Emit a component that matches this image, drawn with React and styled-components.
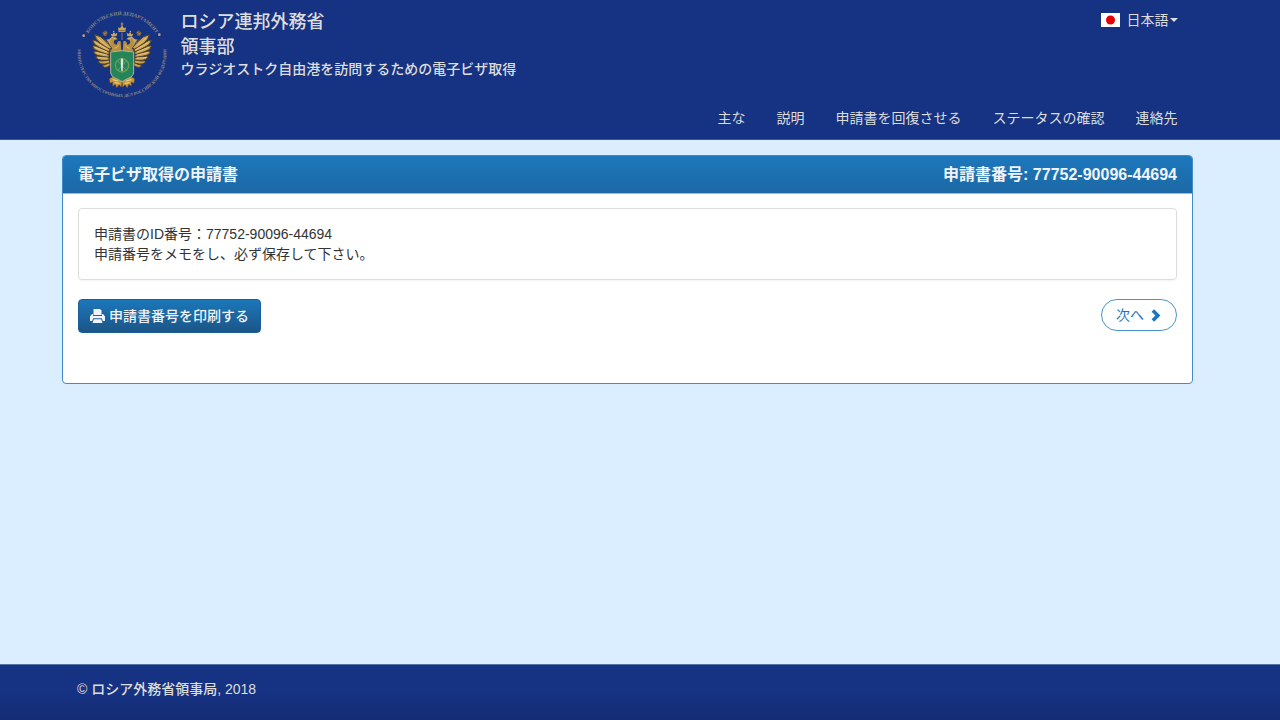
import React, { useState } from "react";
import styled, { createGlobalStyle } from "styled-components";

const GlobalStyle = createGlobalStyle`
  * {
    box-sizing: border-box;
  }

  body {
    margin: 0;
    background-color: #dbeeff;
    color: #333;
    font-family: "Liberation Sans", "Noto Sans CJK JP", sans-serif;
    font-size: 14px;
    line-height: 20px;
  }

  button,
  select {
    font: inherit;
  }
`;

const Page = styled.div`
  min-height: 100vh;
  display: flex;
  flex-direction: column;
`;

const Container = styled.div`
  max-width: 1131px;
  margin: 0 auto;
  padding: 0 ${(props) => (props.$flush ? "0" : "15px")};
`;

const Header = styled.header`
  padding: 10px 26px 11px 0;
  border-bottom: 1px solid #3f5796;
  background-color: #163282;
  color: #ddd;
`;

const TopRow = styled.div`
  display: flex;
  justify-content: space-between;
  align-items: flex-start;
`;

const Brand = styled.a`
  display: flex;
  gap: 14px;
  color: inherit;
  font-weight: 500;
  text-decoration: none;
`;

const EmblemSvg = styled.svg`
  display: block;
  width: 90px;
  height: 90px;
`;

const BrandText = styled.div`
  display: flex;
  flex-direction: column;
`;

const BrandTitle = styled.span`
  font-size: 18px;
  line-height: 25px;
`;

const BrandSubtitle = styled.span`
  line-height: 18px;
`;

const LanguagePicker = styled.label`
  display: flex;
  align-items: center;
`;

const FlagSvg = styled.svg`
  display: block;
  width: 19px;
  height: 14px;
  margin-right: 7px;
`;

const LanguageSelect = styled.select`
  appearance: none;
  padding: 0;
  border: 0;
  background: none;
  color: inherit;
  cursor: pointer;

  option {
    color: #333;
  }
`;

const Caret = styled.span`
  margin-left: 1px;
  border-top: 4px solid currentColor;
  border-right: 4px solid transparent;
  border-left: 4px solid transparent;
`;

const Nav = styled.nav`
  display: flex;
  flex-wrap: wrap;
  justify-content: flex-end;
  gap: 0 31px;
  margin-top: 8px;
`;

const NavLink = styled.a`
  color: inherit;
  text-decoration: none;
`;

const Main = styled.main`
  flex: 1;
  padding: 15px 25px 20px 0;
`;

const Panel = styled.section`
  border: 1px solid #428bca;
  border-radius: 4px;
  background-color: #fff;
  overflow: hidden;
`;

const PanelHeading = styled.div`
  display: flex;
  justify-content: space-between;
  padding: 9px 15px 8px;
  border-bottom: 1px solid #8fbfe2;
  background-image: linear-gradient(#1c78bc, #1c68a5);
  color: #f0f4f9;
`;

const PanelTitle = styled.h1`
  margin: 0;
  font-size: 16px;
  line-height: 20px;
  font-weight: 700;
`;

const PanelBody = styled.div`
  padding: 14px 15px 50px;
`;

const Well = styled.div`
  padding: 15px;
  border: 1px solid #ddd;
  border-radius: 4px;
  box-shadow: 0 1px 2px rgba(0, 0, 0, 0.05);
`;

const Actions = styled.div`
  display: flex;
  justify-content: space-between;
  align-items: flex-start;
  margin-top: 19px;
`;

const PrintButton = styled.button`
  display: flex;
  align-items: center;
  gap: 4px;
  padding: 6px 11px 6px 11px;
  border: 1px solid #1c5f96;
  border-radius: 4px;
  background-image: linear-gradient(#1c77ba, #1b5587);
  color: #f0f4f9;
  font-weight: 500;
  cursor: pointer;
`;

const NextButton = styled.button`
  display: flex;
  align-items: center;
  gap: 7px;
  padding: 5px 15px 5px 14px;
  border: 1px solid #4a94cb;
  border-radius: 16px;
  background-color: #fff;
  color: #1c75bb;
  cursor: pointer;
`;

const Footer = styled.footer`
  padding: 14px 25px 21px 0;
  border-top: 1px solid #5a70a8;
  background-image: linear-gradient(#163282 50%, #132c74);
  color: #ddd;
  font-weight: 500;
`;

const navItems = [
  "主な",
  "説明",
  "申請書を回復させる",
  "ステータスの確認",
  "連絡先",
];

const applicationId = "77752-90096-44694";

// right half of a wing, feathers fan out from the shoulder
const feathers = [
  "M212 142 L226 126 Q244 106 262 104 Q260 118 246 129 L218 152 Z",
  "M216 148 L246 130 Q262 118 268 121 Q266 134 250 141 L219 158 Z",
  "M218 156 L248 143 Q264 134 268 139 Q266 150 248 155 L220 165 Z",
  "M219 164 L246 157 Q262 151 265 156 Q261 166 244 168 L219 173 Z",
  "M219 172 L243 170 Q256 166 259 171 Q254 180 240 181 L218 181 Z",
  "M218 180 L238 183 Q250 181 251 186 Q245 194 232 192 L217 189 Z",
  "M217 188 L231 194 Q239 194 239 198 Q232 205 224 201 L215 196 Z",
];

const HalfEagle = () => (
  <g>
    <path
      d="M182 154 L184 124 Q190 121 193 125 L196 134 Q204 134 205 127 Q205 120 199 119 L193 118 Q198 109 207 111 Q218 113 218 126 Q218 137 209 144 L216 154 Z"
      fill="#b98f3e"
    />
    <path
      d="M207 111 Q218 113 218 126 Q218 137 209 144 M190 136 Q194 144 203 145 M199 115 L206 116"
      fill="none"
      stroke="#ead79a"
      strokeWidth="2"
    />
    <path d="M214 116 L228 119 L222 124 L227 129 L216 127 Z" fill="#c8a65a" />
    <path d="M196 108 L194 98 L200 102 L205 95 L208 103 L214 101 L210 110 Z" fill="#c8a65a" />
    <circle cx="205" cy="94" r="2" fill="#e6d08a" />
    {feathers.map((d) => (
      <path key={d} d={d} fill="#cba250" stroke="#4f4028" strokeWidth="3" />
    ))}
    <path
      d="M224 140 L253 113 M224 148 L260 127 M225 156 L261 142 M225 165 L257 158 M224 174 L252 173"
      stroke="#f1dda0"
      strokeWidth="2"
    />
    <path d="M222 96 L231 91 L239 99 L234 109 L226 106 Z" fill="#6d5a42" />
    <path d="M225 97 L234 102 M228 107 L236 98" stroke="#b9975a" strokeWidth="2" />
    <path
      d="M192 236 L207 230 L218 236 L216 250 L208 246 L208 259 L200 253 L196 264 L189 254 L182 262 L180 244 Z"
      fill="#c9953a"
      stroke="#5c4722"
      strokeWidth="1"
    />
    <path d="M192 243 L208 239 M188 250 L202 248" stroke="#f3d988" strokeWidth="3" />
  </g>
);

const Emblem = () => (
  <EmblemSvg viewBox="45 30 270 270" aria-hidden="true">
    <defs>
      <path id="ring-top" d="M60 165 A120 120 0 0 1 300 165" />
      <path id="ring-bottom" d="M49 135 A133 133 0 1 0 311 135" />
    </defs>
    <g
      fill="#918b84"
      fontFamily="Liberation Serif, serif"
      fontWeight="700"
      textAnchor="middle"
    >
      <text fontSize="15">
        <textPath href="#ring-top" startOffset="50%">
          КОНСУЛЬСКИЙ ДЕПАРТАМЕНТ
        </textPath>
      </text>
      <text fontSize="13">
        <textPath href="#ring-bottom" startOffset="50%">
          МИНИСТЕРСТВА ИНОСТРАННЫХ ДЕЛ РОССИЙСКОЙ ФЕДЕРАЦИИ
        </textPath>
      </text>
    </g>
    <circle cx="65" cy="107" r="4" fill="#c2a66a" />
    <circle cx="292" cy="104" r="4" fill="#c2a66a" />
    <HalfEagle />
    <g transform="matrix(-1 0 0 1 360 0)">
      <HalfEagle />
    </g>
    <path
      d="M170 96 L168 82 L174 85 L180 76 L186 85 L192 82 L190 96 Z"
      fill="#c8a65a"
    />
    <path d="M180 67 V79 M176 72 H184" stroke="#d9bd78" strokeWidth="2" />
    <path d="M172 92 H188" stroke="#6d5330" strokeWidth="2" />
    <path d="M180 97 V120" stroke="#8c7650" strokeWidth="3" />
    <path
      d="M146 156 Q180 148 215 156 V215 Q215 231 196 236 L180 245 L164 236 Q146 231 146 215 Z"
      fill="#258558"
      stroke="#b5b59a"
      strokeWidth="3"
    />
    <circle cx="180" cy="196" r="20" fill="none" stroke="#6f9c58" strokeWidth="4" />
    <path d="M167 183 L192 210 M193 183 L168 210" stroke="#6aa567" strokeWidth="3" />
    <path d="M180 173 L184 180 L182 213 H178 L176 180 Z" fill="#dbe9dc" />
  </EmblemSvg>
);

const Flag = () => (
  <FlagSvg viewBox="0 0 19 14" aria-hidden="true">
    <rect width="19" height="14" fill="#fff" />
    <circle cx="9.5" cy="7" r="4.5" fill="#e60000" />
  </FlagSvg>
);

const PrintIcon = () => (
  <svg width="15" height="14" viewBox="0 0 15 14" fill="currentColor" aria-hidden="true">
    <path d="M4 0h6l1.500 1.500V6h-8V.5z" />
    <path d="M2 5h1v2h9V5h1l2 2.500V12h-2.200l-1-2.800H3.200L2.200 12H0V7.500z" />
    <path d="M3.800 10.300h7.400l1.300 3.700h-10z" />
  </svg>
);

const ChevronIcon = () => (
  <svg width="10" height="13" viewBox="0 0 10 13" fill="currentColor" aria-hidden="true">
    <path d="M3.100.2 9.400 6.500 3.100 12.800.6 10.300 4.400 6.500.6 2.700z" />
  </svg>
);

const App = () => {
  const [language, setLanguage] = useState("ja");

  return (
    <Page>
      <GlobalStyle />
      <Header>
        <Container>
          <TopRow>
            <Brand href="#">
              <Emblem />
              <BrandText>
                <BrandTitle>ロシア連邦外務省</BrandTitle>
                <BrandTitle>領事部</BrandTitle>
                <BrandSubtitle>
                  ウラジオストク自由港を訪問するための電子ビザ取得
                </BrandSubtitle>
              </BrandText>
            </Brand>
            <LanguagePicker>
              <Flag />
              <LanguageSelect
                aria-label="言語"
                value={language}
                onChange={(e) => setLanguage(e.target.value)}
              >
                <option value="ja">日本語</option>
              </LanguageSelect>
              <Caret />
            </LanguagePicker>
          </TopRow>
          <Nav>
            {navItems.map((item) => (
              <NavLink key={item} href="#">
                {item}
              </NavLink>
            ))}
          </Nav>
        </Container>
      </Header>

      <Main>
        <Container $flush>
          <Panel>
            <PanelHeading>
              <PanelTitle>電子ビザ取得の申請書</PanelTitle>
              <PanelTitle as="div">申請書番号: {applicationId}</PanelTitle>
            </PanelHeading>
            <PanelBody>
              <Well>
                <div>申請書のID番号：{applicationId}</div>
                <div>申請番号をメモをし、必ず保存して下さい。</div>
              </Well>
              <Actions>
                <PrintButton type="button" onClick={() => window.print()}>
                  <PrintIcon />
                  申請書番号を印刷する
                </PrintButton>
                <NextButton type="button">
                  次へ
                  <ChevronIcon />
                </NextButton>
              </Actions>
            </PanelBody>
          </Panel>
        </Container>
      </Main>

      <Footer>
        <Container>© ロシア外務省領事局, 2018</Container>
      </Footer>
    </Page>
  );
};

export default App;
